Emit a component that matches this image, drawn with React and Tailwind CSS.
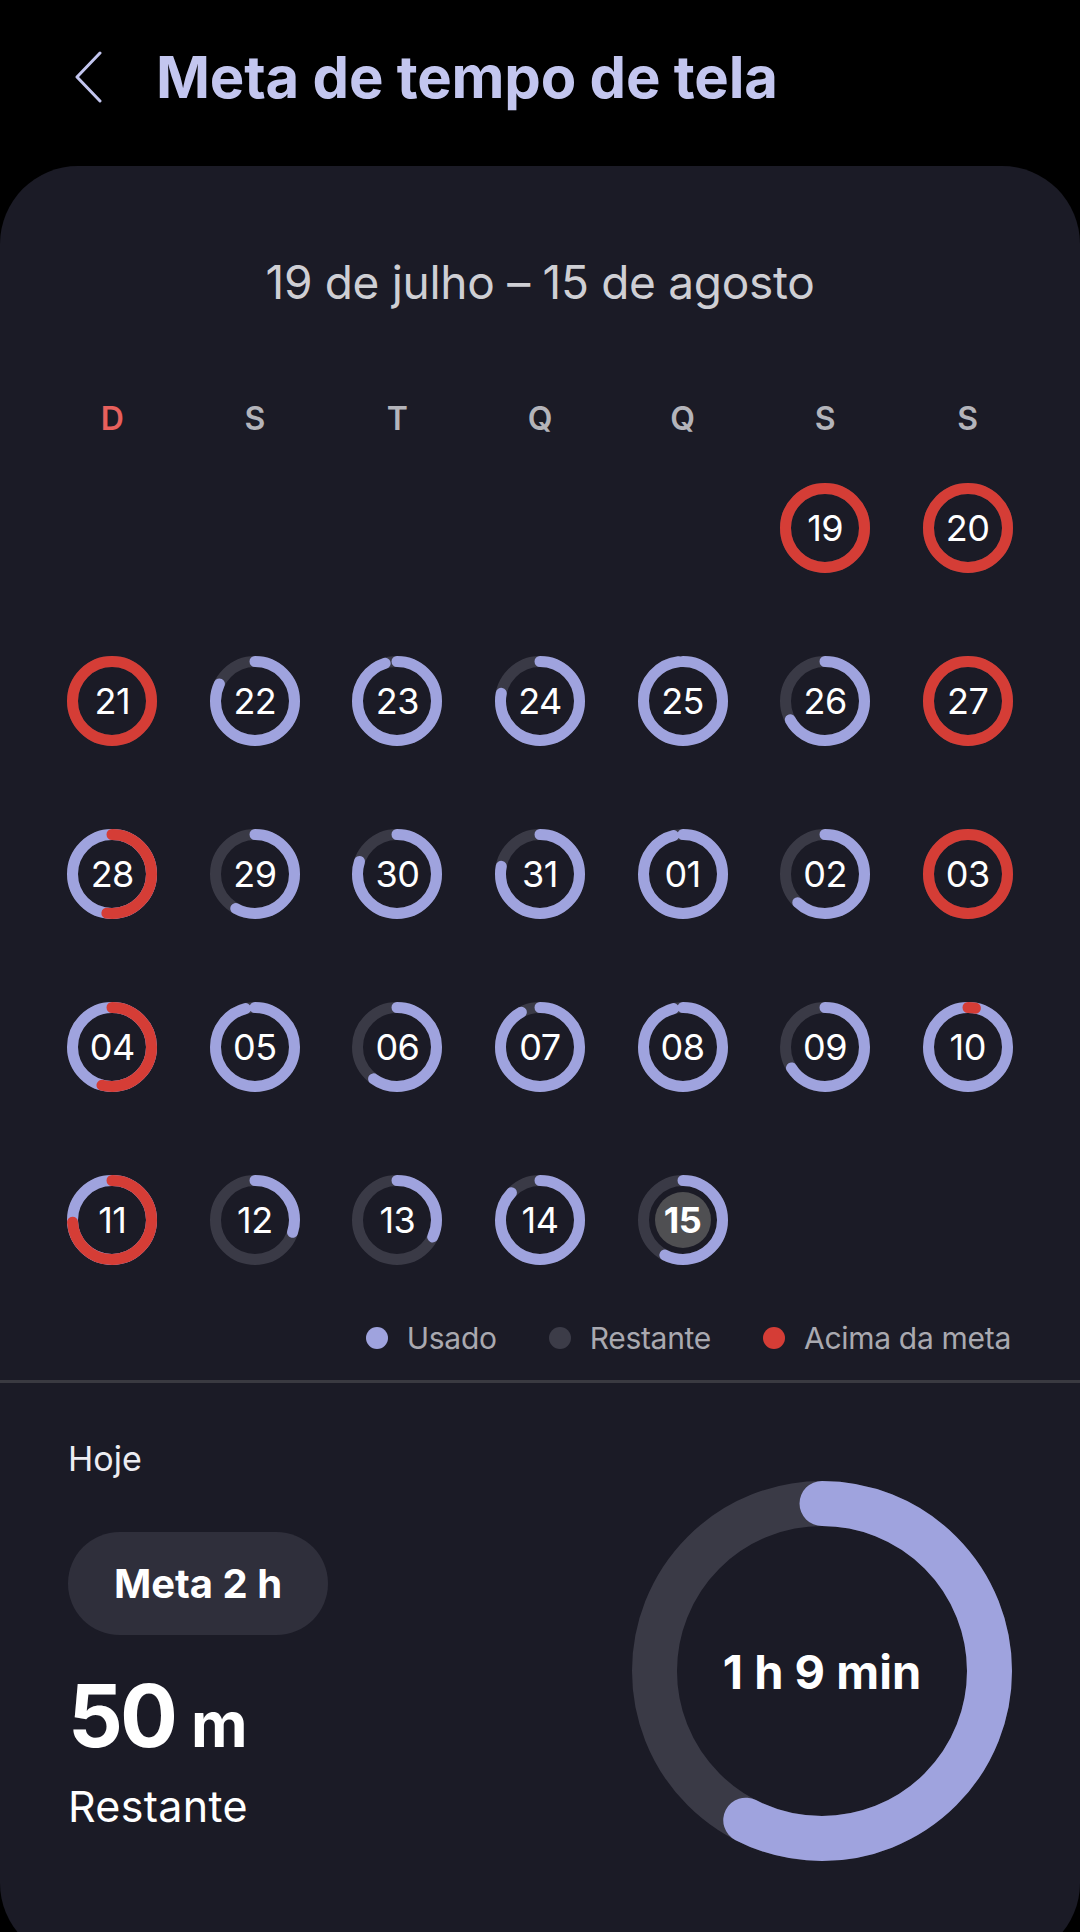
import React from 'react';

const LAV = '#9fa3de';
const TRACK = '#3a3a46';
const RED = '#d53d36';
const SMALL_C = 2 * Math.PI * 39.5;
const BIG_C = 2 * Math.PI * 167.5;

const days = [
  null, null, null, null, null,
  { d: '19', over: 1 },
  { d: '20', over: 1 },
  { d: '21', over: 1 },
  { d: '22', f: 0.82 },
  { d: '23', f: 0.95 },
  { d: '24', f: 0.78 },
  { d: '25', f: 0.98 },
  { d: '26', f: 0.67 },
  { d: '27', over: 1 },
  { d: '28', f: 1, over: 0.52 },
  { d: '29', f: 0.58 },
  { d: '30', f: 0.8 },
  { d: '31', f: 0.78 },
  { d: '01', f: 0.96 },
  { d: '02', f: 0.62 },
  { d: '03', over: 1 },
  { d: '04', f: 1, over: 0.54 },
  { d: '05', f: 0.96 },
  { d: '06', f: 0.6 },
  { d: '07', f: 0.92 },
  { d: '08', f: 0.96 },
  { d: '09', f: 0.66 },
  { d: '10', f: 1, over: 0.03 },
  { d: '11', f: 1, over: 0.74 },
  { d: '12', f: 0.3 },
  { d: '13', f: 0.32 },
  { d: '14', f: 0.87 },
  { d: '15', f: 0.575, today: true },
];

const weekdays = ['D', 'S', 'T', 'Q', 'Q', 'S', 'S'];

const Arc = ({ f, color }) => {
  if (!f) return null;
  if (f >= 1) {
    return <circle cx="45" cy="45" r="39.5" fill="none" stroke={color} strokeWidth="11" />;
  }
  return (
    <circle
      cx="45"
      cy="45"
      r="39.5"
      fill="none"
      stroke={color}
      strokeWidth="11"
      strokeLinecap="round"
      strokeDasharray={`${f * SMALL_C} ${SMALL_C}`}
    />
  );
};

const DayRing = ({ day }) => (
  <div className="relative flex h-[90px] w-[90px] items-center justify-center">
    <svg width="90" height="90" viewBox="0 0 90 90" className="absolute inset-0 -rotate-90">
      <circle cx="45" cy="45" r="39.5" fill="none" stroke={TRACK} strokeWidth="11" />
      <Arc f={day.f} color={LAV} />
      <Arc f={day.over} color={RED} />
    </svg>
    {day.today && <div className="absolute h-[56px] w-[56px] rounded-full bg-[#4f4f52]" />}
    <span
      className={`relative text-[36px] leading-none tracking-[-0.5px] text-white ${day.today ? 'font-bold' : 'font-normal'}`}
    >
      {day.d}
    </span>
  </div>
);

const LegendItem = ({ color, label }) => (
  <div className="flex items-center gap-[19px]">
    <span className="h-[22px] w-[22px] rounded-full" style={{ backgroundColor: color }} />
    <span className="text-[30px] leading-none tracking-[-0.3px] text-[#a9a9b0]">{label}</span>
  </div>
);

export default function App() {
  return (
    <div className="min-h-[1932px] w-[1080px] bg-black font-['Inter',sans-serif]">
      {/* Header */}
      <div className="flex h-[166px] items-start pl-[74px] pt-[48px]">
        <div className="flex items-center gap-[53px]">
          <svg width="29" height="52" viewBox="0 0 29 52" fill="none">
            <path d="M26 2 L3 26 L26 50" stroke="#c3c6ef" strokeWidth="3" strokeLinecap="round" strokeLinejoin="round" />
          </svg>
          <h1 className="text-[58px] font-bold leading-none tracking-[-0.2px] text-[#c3c6ef]">
            Meta de tempo de tela
          </h1>
        </div>
      </div>

      {/* Card */}
      <div className="rounded-[78px] bg-[#1b1b26] pt-[93px]">
        <p className="text-center text-[46px] font-normal leading-none tracking-[-0.3px] text-[#cfcfd4]">
          19 de julho – 15 de agosto
        </p>

        <div className="mt-[98px] grid grid-cols-7 px-[41px]">
          {weekdays.map((w, i) => (
            <p
              key={i}
              className={`text-center text-[32px] font-semibold leading-none ${i === 0 ? 'text-[#e8605c]' : 'text-[#b4b4ba]'}`}
            >
              {w}
            </p>
          ))}
        </div>

        <div className="mt-[48px] grid grid-cols-7 gap-y-[83px] px-[41px]">
          {days.map((day, i) => (
            <div key={i} className="flex justify-center">
              {day ? <DayRing day={day} /> : <div className="h-[90px] w-[90px]" />}
            </div>
          ))}
        </div>

        <div className="mt-[58px] flex justify-end gap-[52px] pr-[69px]">
          <LegendItem color={LAV} label="Usado" />
          <LegendItem color="#3c3c48" label="Restante" />
          <LegendItem color={RED} label="Acima da meta" />
        </div>

        <div className="mt-[27px] h-[3px] bg-[#3a3a41]" />

        {/* Today */}
        <div className="flex justify-between px-[68px] pb-[100px] pt-[59px]">
          <div className="flex flex-col items-start">
            <p className="text-[34px] leading-none text-[#ededf2]">Hoje</p>
            <div className="mt-[56px] flex h-[103px] w-[260px] items-center justify-center rounded-full bg-[#2f2f3b]">
              <span className="text-[40px] font-bold leading-none text-white">Meta 2 h</span>
            </div>
            <div className="mt-[38px] flex items-baseline">
              <span className="text-[86px] font-bold leading-none tracking-[-3px] text-white">50</span>
              <span className="ml-[16px] text-[62px] font-bold leading-none text-white">m</span>
            </div>
            <p className="mt-[26px] text-[43px] leading-none tracking-[0.3px] text-white">Restante</p>
          </div>

          <div className="relative mt-[39px] flex h-[380px] w-[380px] items-center justify-center">
            <svg width="380" height="380" viewBox="0 0 380 380" className="absolute inset-0 -rotate-90">
              <circle cx="190" cy="190" r="167.5" fill="none" stroke={TRACK} strokeWidth="45" />
              <circle
                cx="190"
                cy="190"
                r="167.5"
                fill="none"
                stroke={LAV}
                strokeWidth="45"
                strokeLinecap="round"
                strokeDasharray={`${0.575 * BIG_C} ${BIG_C}`}
              />
            </svg>
            <span className="relative text-[47px] font-bold leading-none text-white">1 h 9 min</span>
          </div>
        </div>
      </div>
    </div>
  );
}
